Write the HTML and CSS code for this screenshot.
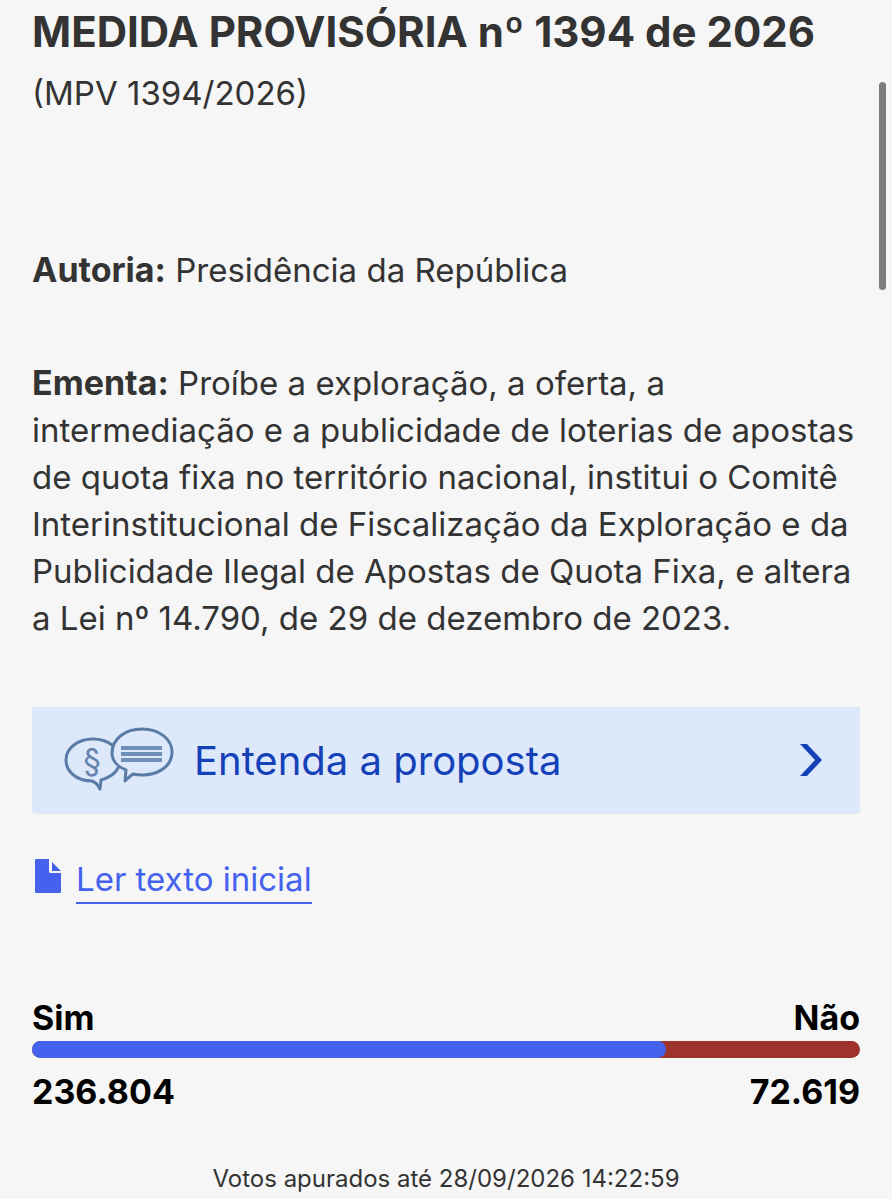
FILE: index.html
```html
<!DOCTYPE html>
<html lang="pt-BR">
<head>
  <meta charset="UTF-8" />
  <meta name="viewport" content="width=device-width, initial-scale=1" />
  <title>MPV 1394/2026</title>
  <link rel="stylesheet" href="styles.css">
</head>
<body>
  <main class="materia">
    <h1>MEDIDA PROVISÓRIA nº 1394 de 2026</h1>
    <p class="sigla">(MPV 1394/2026)</p>

    <p class="autoria"><strong>Autoria:</strong> Presidência da República</p>

    <p class="ementa"><strong>Ementa:</strong> Proíbe a exploração, a oferta, a intermediação e a publicidade de loterias de apostas de quota fixa no território nacional, institui o Comitê Interinstitucional de Fiscalização da Exploração e da Publicidade Ilegal de Apostas de Quota Fixa, e altera a Lei nº 14.790, de 29 de dezembro de 2023.</p>

    <a class="entenda" href="#">
      <svg class="baloes" viewBox="0 0 110 66" aria-hidden="true">
        <path d="M29 12C14 12 2 21 2 33C2 45 13 54 28 54C31 55 34 58 36 62L37 53C48 50 56 43 56 33C56 21 44 12 29 12Z" />
        <path class="frente" d="M78 2C61 2 48 12 48 26C48 34 54 40 62 43L61 54C63 52 66 49 69 47C92 51 108 40 108 25C108 12 95 2 78 2Z" />
        <path class="linhas" d="M57 21H98M57 27H98M57 33H98" />
        <text x="28" y="45">§</text>
      </svg>
      <span>Entenda a proposta</span>
      <svg class="seta" viewBox="0 0 22 32" aria-hidden="true"><path d="M0 0H7L22 16L7 32H0L15 16Z" /></svg>
    </a>

    <div class="texto">
      <svg class="arquivo" viewBox="0 0 26 34" aria-hidden="true"><path d="M0 1Q0 0 1 0H14V13Q14 14 16 14H26V33Q26 34 25 34H1Q0 34 0 33ZM17 3L26 12H17Z" /></svg>
      <a href="#">Ler texto inicial</a>
    </div>

    <section class="votos">
      <div class="linha"><span>Sim</span><span>Não</span></div>
      <div class="barra"><div class="sim" style="width: 76.53%"></div></div>
      <div class="linha"><span>236.804</span><span>72.619</span></div>
      <p class="apurados">Votos apurados até 28/09/2026 14:22:59</p>
    </section>
  </main>
  <div class="rolagem"></div>
</body>
</html>
```

FILE: styles.css
```css
* {
  box-sizing: border-box;
}
body {
  margin: 0;
  background: #f6f6f6;
  color: #333;
  font-family: Inter, "Liberation Sans", sans-serif;
  font-size: 33px;
  line-height: 47px;
}
h1, p {
  margin: 0;
}
strong {
  font-size: 34px;
  line-height: 1;
}
.materia {
  padding: 8px 32px 0;
}
h1 {
  font-size: 42px;
  line-height: 48px;
}
.sigla {
  margin-top: 14px;
}
.autoria {
  margin-top: 130px;
}
.ementa {
  margin-top: 66px;
}
.entenda {
  display: flex;
  align-items: center;
  gap: 20px;
  height: 106px;
  margin-top: 65px;
  padding: 0 38px 0 32px;
  border-radius: 0 0 4px 4px;
  background: #dde8fb;
  box-shadow: 0 1px 1px #e6e6ee;
  color: #1541b8;
  font-size: 40px;
  text-decoration: none;
}
.baloes {
  width: 110px;
  height: 66px;
  fill: none;
  stroke: #597ba5;
  stroke-width: 3;
  stroke-linejoin: round;
}
.baloes .frente {
  fill: #dde8fb;
}
.baloes .linhas {
  stroke: #7190b8;
  stroke-width: 4;
}
.baloes text {
  fill: #6484ae;
  stroke: none;
  font-size: 32px;
  text-anchor: middle;
}
.seta {
  width: 22px;
  height: 32px;
  margin-left: auto;
  fill: #1541b8;
}
.texto {
  display: flex;
  gap: 15px;
  margin: 44px 0 90px 3px;
}
.texto a {
  border-bottom: 2px solid #4462ee;
  color: #4462ee;
  line-height: 45px;
  text-decoration: none;
}
.arquivo {
  width: 26px;
  height: 34px;
  margin-top: 2px;
  fill: #4462ee;
}
.linha {
  display: flex;
  justify-content: space-between;
  color: #000;
  font-size: 34px;
  font-weight: 700;
}
.barra {
  height: 17px;
  margin-bottom: 10px;
  border-radius: 9px;
  background: #9f332b;
  overflow: hidden;
}
.sim {
  height: 100%;
  border-radius: 0 9px 9px 0;
  background: #4462ee;
}
.apurados {
  margin-top: 48px;
  font-size: 24px;
  line-height: 32px;
  text-align: center;
}
.rolagem {
  position: absolute;
  top: 82px;
  right: 6px;
  width: 7px;
  height: 208px;
  border-radius: 4px;
  background: #7d7d7d;
}
```
